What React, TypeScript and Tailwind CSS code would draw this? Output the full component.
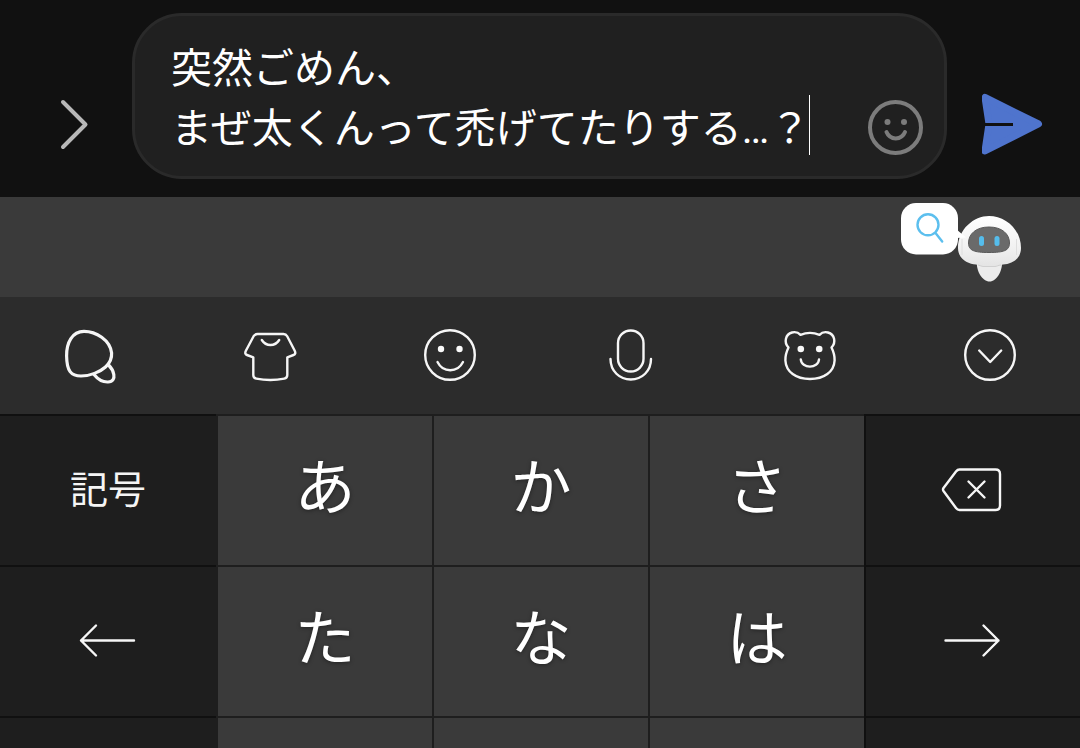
import { useState } from "react";
import type { ReactNode } from "react";

const line = {
  fill: "none",
  stroke: "#f6f6f6",
  strokeWidth: 2.4,
  strokeLinecap: "round" as const,
  strokeLinejoin: "round" as const,
};

function ToolIcon({ type }: { type: string }) {
  return (
    <svg width="60" height="60" viewBox="0 0 60 60" {...line}>
      {type === "search" && (
        <g strokeWidth="3.2">
          <path d="M24 6.4C12 6.4 6.4 18 6.6 31C6.8 46 11 51 21 51C30 51 40 47 45.5 42C49.500 38.300 52 33.500 51.600 28C50 15 36 6.400 24 6.400Z" />
          <path d="M34 49.500C38 54.500 43 57.200 48 57C53 56.800 54.500 53.500 53.800 49.500C53.200 46 51.500 43 49 40.500" />
        </g>
      )}
      {type === "theme" && (
        <>
          <path d="M17.500 9H43.500Q46 9 47.200 11.200L54.600 25.500Q56.400 29 53.500 30L47.300 32.300V50Q47.300 53 44.300 53.600Q30.300 56.400 16.300 53.600Q13.300 53 13.300 50V32.300L7 30Q4.200 29 6 25.500L13.600 11.200Q15 9 17.500 9Z" />
          <path d="M21.800 15Q25 20 30.500 20Q36 20 39.200 15" />
        </>
      )}
      {type === "emoji" && (
        <>
          <circle cx="30" cy="30" r="24.800" />
          <path d="M17.500 37C23 48 37.500 48 43 37" />
          <circle cx="21" cy="24" r="3.200" fill="#fafafa" stroke="none" />
          <circle cx="39.500" cy="24" r="3.200" fill="#fafafa" stroke="none" />
        </>
      )}
      {type === "voice" && (
        <>
          <rect x="18" y="5.500" width="25.500" height="41" rx="12.700" />
          <path d="M10.500 34C10.500 46 19.500 54.500 30.800 54.500C42 54.500 51 46 51 34" />
        </>
      )}
      {type === "sticker" && (
        <>
          <path d="M20.500 9.800Q30 6 39.500 9.800C42 7.200 45 6.700 48 7.500C54.500 9.500 56.500 17 51.500 22.500C53.500 26.500 54.800 31 54.600 35.500C54 47 44 54 30 54C16 54 6 47 5.400 35.500C5.200 31 6.500 26.500 8.500 22.500C3.500 17 5.500 9.500 12 7.500C15 6.700 18 7.200 20.500 9.800Z" />
          <path d="M20.800 34.500C21.500 44 38.300 44 39 34.500" />
          <circle cx="20.800" cy="24" r="3.300" fill="#fafafa" stroke="none" />
          <circle cx="39.200" cy="24" r="3.300" fill="#fafafa" stroke="none" />
        </>
      )}
      {type === "close" && (
        <>
          <circle cx="30" cy="30" r="24.800" />
          <path d="M19.200 25.500L30.200 37L41.200 25.500" />
        </>
      )}
    </svg>
  );
}

function KeyIcon({ type }: { type: string }) {
  return (
    <svg width="64" height="48" viewBox="0 0 64 48" {...line}>
      {type === "delete" && (
        <>
          <path d="M18.500 2.500H54.500Q59 2.500 59 7V38.500Q59 43 54.500 43H18.500Q16.500 43 15 41L2.500 24Q1.500 22.500 2.500 21L15 4.500Q16.500 2.500 18.500 2.500Z" />
          <path d="M27.500 14.500L43.500 30.500M43.500 14.500L27.500 30.500" />
        </>
      )}
      {type === "left" && <path d="M58 22.500H5M20 7.500L5 22.500L20 37.500" />}
      {type === "right" && <path d="M4.500 22.500H57.500M42.500 7.500L57.500 22.500L42.500 37.500" />}
    </svg>
  );
}

function Assistant() {
  return (
    <svg width="124" height="92" viewBox="0 0 124 92">
      <defs>
        <linearGradient id="head" x1="0" y1="0" x2="0" y2="1">
          <stop offset="0" stopColor="#ffffff" />
          <stop offset="0.6" stopColor="#f2f2f2" />
          <stop offset="1" stopColor="#e4e4e4" />
        </linearGradient>
      </defs>
      <path d="M78 61H103C103.500 70 97.500 80.500 90.500 80.500C83.500 80.500 77 70 78 61Z" fill="#ececec" />
      <path
        d="M90 15C75 15 59 28 59 47C59 58 69 63 77 63.500C80 63.700 81 65.500 84 65.500H96C99 65.500 101 63.700 104 63.500C113 63 122 58 122 47C122 28 106 15 90 15Z"
        fill="url(#head)"
      />
      <path d="M79 64C81 64.200 82 65.500 84 65.500H96C98 65.500 99 64.200 102 64" fill="none" stroke="#d0d0d0" strokeWidth="1" />
      <path d="M63 38V54M117.500 38V54" stroke="#dedede" strokeWidth="1" />
      <path d="M90 26C77 26 69.500 33 69.500 42C69.500 49.500 75 51.500 90 51.500C105 51.500 110.500 49.500 110.500 42C110.500 33 103 26 90 26Z" fill="#6a6a6a" stroke="#5a5a5a" strokeWidth="1" />
      <rect x="80" y="35" width="5" height="10" rx="2.500" fill="#55bdec" />
      <rect x="95.500" y="35" width="5" height="10" rx="2.500" fill="#55bdec" />
      <rect x="2" y="2" width="57" height="51.500" rx="15" fill="#ffffff" />
      <path d="M57 28L67 36.500L57 37Z" fill="#ffffff" />
      <g fill="none" stroke="#5cbfee" strokeWidth="2.400" strokeLinecap="round">
        <circle cx="29" cy="23.800" r="10.500" />
        <path d="M36.500 32L43.200 40.500" />
      </g>
    </svg>
  );
}

const TOOLS = [
  { id: "search", label: "検索" },
  { id: "theme", label: "きせかえ" },
  { id: "emoji", label: "絵文字" },
  { id: "voice", label: "音声入力" },
  { id: "sticker", label: "スタンプ" },
  { id: "close", label: "閉じる" },
];

const KANA_ROWS = [
  ["あ", "か", "さ"],
  ["た", "な", "は"],
];

function SideKey({ label, right, children }: { label: string; right?: boolean; children?: ReactNode }) {
  return (
    <button
      type="button"
      aria-label={label}
      className={`flex h-[151px] items-center justify-center border-t-2 border-[#101010] bg-[#1e1e1e] text-[38px] text-neutral-100 ${right ? "border-l-2" : ""}`}
    >
      {children}
    </button>
  );
}

function KanaKey({ label, children }: { label?: string; children?: ReactNode }) {
  return (
    <button
      type="button"
      aria-label={label}
      className="flex h-[151px] items-center justify-center border-t-2 border-l-2 border-[#1e1e1e] bg-[#3a3a3a] pb-0.5 text-[61px] leading-none text-white text-shadow-[0_1px_4px_rgb(0_0_0/0.4)]"
    >
      {children}
    </button>
  );
}

function MessageBar() {
  const [message, setMessage] = useState("突然ごめん、\nまぜ太くんって禿げてたりする…？");

  return (
    <header className="flex items-end bg-[#111111] pt-[13px] pb-[18px]">
      <button type="button" aria-label="メニューを開く" className="flex h-[108px] w-[132px] shrink-0 items-center justify-center">
        <svg width="56" height="56" viewBox="0 0 56 56" {...line} stroke="#b8b8b8" strokeWidth="4">
          <path d="M25 5L47.500 27.500L25 50" />
        </svg>
      </button>

      <div className="relative flex h-[166px] min-w-0 flex-1 items-end rounded-[50px] border-[3px] border-[#2a2a2a] bg-[#202020] pr-5">
        <textarea
          aria-label="メッセージ"
          value={message}
          onChange={(e) => setMessage(e.target.value)}
          className="h-full min-w-0 flex-1 resize-none overflow-hidden bg-transparent pt-[23px] pl-9 text-[41px] leading-[60px] text-white caret-transparent outline-none"
        />
        <span className="absolute top-[79px] left-[674px] h-[60px] w-px bg-white" />
        <button type="button" aria-label="スタンプ" className="mb-5 shrink-0">
          <svg width="56" height="56" viewBox="0 0 56 56" {...line} stroke="#7c7c7c" strokeWidth="4">
            <circle cx="27.500" cy="27.500" r="25.500" />
            <path d="M18.500 32C22 40.500 33.500 40.500 37 32" />
            <circle cx="19.500" cy="22" r="3" fill="#7c7c7c" stroke="none" />
            <circle cx="36" cy="22" r="3" fill="#7c7c7c" stroke="none" />
          </svg>
        </button>
      </div>

      <button type="button" aria-label="送信" className="flex h-[108px] w-[133px] shrink-0 items-center justify-center">
        <svg width="64" height="64" viewBox="0 0 64 64">
          <path
            d="M3 4.500L7 31L3 58L56.500 31Z"
            fill="#4f74cd"
            stroke="#4f74cd"
            strokeWidth="7"
            strokeLinejoin="round"
          />
          <path d="M0 30H31V33H0Z" fill="#111111" />
        </svg>
      </button>
    </header>
  );
}

export default function App() {
  return (
    <main lang="ja" className="h-screen overflow-hidden bg-[#1e1e1e] font-[Roboto,'Noto_Sans_CJK_JP',sans-serif]">
      <MessageBar />

      <div className="flex h-[100px] items-center justify-end bg-[#3a3a3a] pr-[57px]">
        <button type="button" aria-label="アシスタント">
          <Assistant />
        </button>
      </div>

      <nav className="grid h-[117px] grid-cols-6 bg-[#2c2c2c] pb-0.5">
        {TOOLS.map((t) => (
          <button key={t.id} type="button" aria-label={t.label} className="flex items-center justify-center">
            <ToolIcon type={t.id} />
          </button>
        ))}
      </nav>

      <section className="grid grid-cols-5">
        <SideKey label="記号">記号</SideKey>
        {KANA_ROWS[0].map((k) => (
          <KanaKey key={k}>{k}</KanaKey>
        ))}
        <SideKey label="削除" right>
          <KeyIcon type="delete" />
        </SideKey>

        <SideKey label="左へ">
          <KeyIcon type="left" />
        </SideKey>
        {KANA_ROWS[1].map((k) => (
          <KanaKey key={k}>{k}</KanaKey>
        ))}
        <SideKey label="右へ" right>
          <KeyIcon type="right" />
        </SideKey>

        {/* third row, cut off by the bottom of the screen */}
        <SideKey label="文字切替" />
        <KanaKey label="ま" />
        <KanaKey label="や" />
        <KanaKey label="ら" />
        <SideKey label="空白" right />
      </section>
    </main>
  );
}
